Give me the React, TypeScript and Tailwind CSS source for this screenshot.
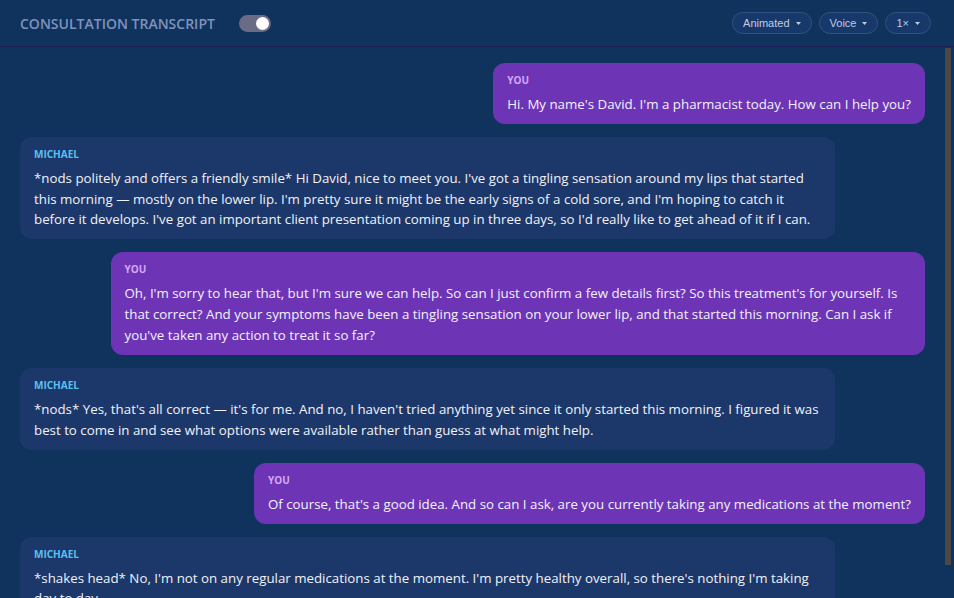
import React from "react";

type Msg = { who: "you" | "michael"; text: string };

const msgs: Msg[] = [
  { who: "you", text: "Hi. My name's David. I'm a pharmacist today. How can I help you?" },
  {
    who: "michael",
    text: "*nods politely and offers a friendly smile* Hi David, nice to meet you. I've got a tingling sensation around my lips that started this morning — mostly on the lower lip. I'm pretty sure it might be the early signs of a cold sore, and I'm hoping to catch it before it develops. I've got an important client presentation coming up in three days, so I'd really like to get ahead of it if I can.",
  },
  {
    who: "you",
    text: "Oh, I'm sorry to hear that, but I'm sure we can help. So can I just confirm a few details first? So this treatment's for yourself. Is that correct? And your symptoms have been a tingling sensation on your lower lip, and that started this morning. Can I ask if you've taken any action to treat it so far?",
  },
  {
    who: "michael",
    text: "*nods* Yes, that's all correct — it's for me. And no, I haven't tried anything yet since it only started this morning. I figured it was best to come in and see what options were available rather than guess at what might help.",
  },
  {
    who: "you",
    text: "Of course, that's a good idea. And so can I ask, are you currently taking any medications at the moment?",
  },
  {
    who: "michael",
    text: "*shakes head* No, I'm not on any regular medications at the moment. I'm pretty healthy overall, so there's nothing I'm taking day to day.",
  },
];

function Pill({ label }: { label: string }) {
  return (
    <button
      className="flex h-[22px] items-center gap-[6px] rounded-full border border-[#34507e] bg-[#17386a] px-[10px] text-[11px] text-[#c3cbe0]"
      style={{ fontFamily: '"Liberation Sans", Arial, sans-serif' }}
    >
      <span>{label}</span>
      <svg width="5" height="3" viewBox="0 0 5 3">
        <path d="M0 0 L5 0 L2.5 3 Z" fill="#c3cbe0" />
      </svg>
    </button>
  );
}

export default function App() {
  return (
    <div
      className="relative flex h-[598px] w-[954px] flex-col overflow-hidden bg-[#10335e] text-white"
      style={{ fontFamily: '"Open Sans", "Noto Sans", sans-serif' }}
    >
      <header className="flex h-[47px] shrink-0 items-center justify-between border-b border-[#1d1a55] pl-[20px] pr-[23px]">
        <div className="flex items-center gap-[24px]">
          <span className="text-[14px] font-semibold uppercase text-[#7f92bd]">
            Consultation Transcript
          </span>
          <div className="flex h-[17px] w-[32px] items-center justify-end rounded-full bg-[#6c6b86] pr-[2px]">
            <div className="h-[13px] w-[13px] rounded-full bg-white" />
          </div>
        </div>
        <div className="flex items-center gap-[7px]">
          <Pill label="Animated" />
          <Pill label="Voice" />
          <Pill label="1×" />
        </div>
      </header>
      <div className="flex min-h-0 flex-1">
        <div className="flex flex-1 flex-col gap-[13px] overflow-hidden pl-[20px] pr-[19px] pt-[16px]">
          {msgs.map((m, i) => (
            <div
              key={i}
              className={
                m.who === "you"
                  ? "max-w-[90%] self-end rounded-[12px] bg-[#6d35b6] px-[14px] pb-[9.3px] pt-[10px]"
                  : "max-w-[90%] self-start rounded-[12px] bg-[#1c386a] px-[14px] pb-[9.3px] pt-[10px]"
              }
            >
              <div
                className={
                  m.who === "you"
                    ? "text-[10px] font-bold uppercase leading-[14px] text-[#d6a8f5]"
                    : "text-[10px] font-bold uppercase leading-[14px] text-[#5bc0f0]"
                }
              >
                {m.who === "you" ? "You" : "Michael"}
              </div>
              <p className="mt-[7px] text-[13.3px] leading-[20.7px] text-[#f2f2f8]">{m.text}</p>
            </div>
          ))}
        </div>
        <div className="flex w-[10px] shrink-0 flex-col pt-[1px]">
          <div className="ml-[1px] h-[517px] w-[6px] bg-[#4b4846]" />
        </div>
      </div>
    </div>
  );
}
